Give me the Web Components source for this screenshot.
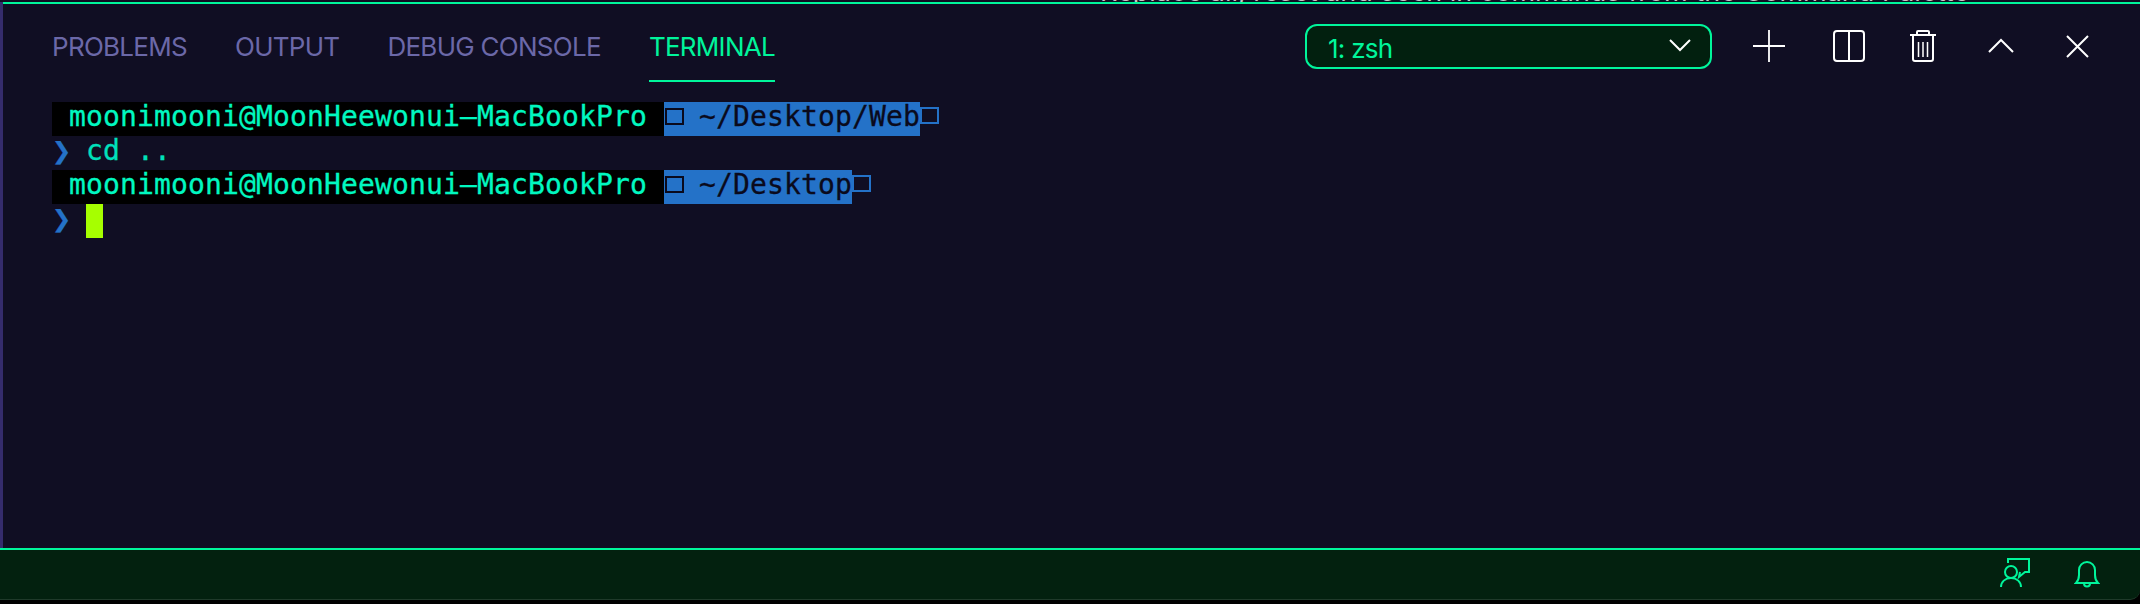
<!DOCTYPE html>
<html>
<head>
<meta charset="utf-8">
<title>Terminal panel</title>
<style>
  html, body { margin: 0; padding: 0; background: #000; }
</style>
</head>
<body>

<vsc-window>
  <panel-header>
    <panel-tab>PROBLEMS</panel-tab>
    <panel-tab>OUTPUT</panel-tab>
    <panel-tab>DEBUG CONSOLE</panel-tab>
    <panel-tab active>TERMINAL</panel-tab>
    <term-select slot="actions">1: zsh</term-select>
    <icon-button slot="actions" icon="plus" style="--gap: 41px"></icon-button>
    <icon-button slot="actions" icon="split" style="--gap: 48px"></icon-button>
    <icon-button slot="actions" icon="trash" style="--gap: 42px"></icon-button>
    <icon-button slot="actions" icon="up" style="--gap: 46px"></icon-button>
    <icon-button slot="actions" icon="close" style="--gap: 45px"></icon-button>
  </panel-header>
  <term-view>
    <prompt-line path="~/Desktop/Web"></prompt-line>
    <command-line>cd ..</command-line>
    <prompt-line path="~/Desktop"></prompt-line>
    <command-line cursor></command-line>
  </term-view>
  <status-bar slot="footer"></status-bar>
</vsc-window>

<script>
// Outer frame: sliver of editor text, green top line, panel body and status bar
class VscWindow extends HTMLElement {
  constructor() {
    super();
    this.attachShadow({ mode: 'open' });
    this.shadowRoot.innerHTML = `
      <style>
        :host { display: flex; flex-direction: column; width: 2140px; height: 604px; background: #000; overflow: hidden; }
        #sliver {
          height: 2px; flex: none; overflow: hidden; background: #100e23;
          padding-left: 1100px; white-space: pre;
          font: 27px/28px "Inter", sans-serif; color: #c8c8c8;
        }
        #sliver span { display: block; margin-top: -22px; }
        #panel {
          flex: 1; display: flex; flex-direction: column; min-height: 0;
          background: #100e23;
          border-left: 3px solid #352c6c;
        }
        #line { height: 2px; flex: none; background: #00f59b; }
        #footer { display: block; flex: none; }
      </style>
      <div id="sliver"><span>Replace all, reset and seen in commands from the Command Palette</span></div>
      <div id="panel">
        <div id="line"></div>
        <slot></slot>
      </div>
      <div id="footer"><slot name="footer"></slot></div>
    `;
  }
}

// Tab row with the terminal actions on its right
class PanelHeader extends HTMLElement {
  constructor() {
    super();
    this.attachShadow({ mode: 'open' });
    this.shadowRoot.innerHTML = `
      <style>
        :host { display: flex; align-items: flex-start; padding: 20px 46px 0 49px; height: 78px; flex: none; }
        #tabs { display: flex; gap: 48px; padding-top: 2px; }
        #actions { margin-left: auto; display: flex; align-items: center; height: 45px; }
      </style>
      <div id="tabs"><slot></slot></div>
      <div id="actions"><slot name="actions"></slot></div>
    `;
  }
}

class PanelTab extends HTMLElement {
  constructor() {
    super();
    this.attachShadow({ mode: 'open' });
    this.shadowRoot.innerHTML = `
      <style>
        :host {
          display: block; height: 40px; padding: 1px 0 13px;
          border-bottom: 2px solid transparent;
          font: 26px/40px "Inter", sans-serif; letter-spacing: -0.72px; color: #6b68a8;
        }
        :host([active]) { color: #00f59b; border-bottom-color: #00f59b; }
      </style>
      <slot></slot>
    `;
  }
}

class TermSelect extends HTMLElement {
  constructor() {
    super();
    this.attachShadow({ mode: 'open' });
    this.shadowRoot.innerHTML = `
      <style>
        :host {
          display: flex; align-items: center; box-sizing: border-box;
          width: 407px; height: 45px; padding: 3px 21px 0;
          background: #02200f; border: 2px solid #00f59b; border-radius: 12px;
          font: 26px "Inter", sans-serif; letter-spacing: -0.72px; color: #00f59b;
        }
        svg { margin: -5px -2px 0 auto; }
      </style>
      <slot></slot>
      <svg width="22" height="13" viewBox="0 0 22 13" fill="none" stroke="#fff" stroke-width="2"><path d="M1 1l10 10L21 1"/></svg>
    `;
  }
}

const ICONS = {
  plus: '<path d="M16 0v32M0 16h32" stroke-width="1.800"/>',
  split: '<rect x="1" y="1" width="30" height="30" rx="3"/><path d="M16 1v30"/>',
  trash: '<path d="M3 5h26M10 5V2a1 1 0 0 1 1-1h10a1 1 0 0 1 1 1v3M6 5v24a2 2 0 0 0 2 2h16a2 2 0 0 0 2-2V5"/><path d="M11.500 12v15M16 12v15M20.500 12v15" stroke-width="1.500"/>',
  up: '<path d="M4 22L16 10l12 12"/>',
  close: '<path d="M5 6l21 21M26 6L5 27"/>'
};

class IconButton extends HTMLElement {
  constructor() {
    super();
    this.attachShadow({ mode: 'open' });
    this.shadowRoot.innerHTML = `
      <style>
        :host { display: block; width: 32px; height: 32px; margin: -2px 0 0 var(--gap, 0); }
        svg { display: block; overflow: visible; }
      </style>
      <svg width="32" height="32" viewBox="0 0 32 32" fill="none" stroke="#fff" stroke-width="2">${ICONS[this.getAttribute('icon')]}</svg>
    `;
  }
}

class TermView extends HTMLElement {
  constructor() {
    super();
    this.attachShadow({ mode: 'open' });
    this.shadowRoot.innerHTML = `
      <style>
        :host {
          display: flex; flex-direction: column; flex: 1; padding-left: 49px;
          font: 28px/30px "DejaVu Sans Mono", monospace; letter-spacing: 0.144px;
          -webkit-text-stroke: 0.3px;
        }
      </style>
      <slot></slot>
    `;
  }
}

// Powerline prompt; the arrows render as empty boxes in the reference
class PromptLine extends HTMLElement {
  constructor() {
    super();
    this.attachShadow({ mode: 'open' });
    const path = this.getAttribute('path');
    this.shadowRoot.innerHTML = `
      <style>
        :host { display: flex; height: 34px; white-space: pre; }
        span { display: block; height: 34px; }
        #user { background: #000; color: #00f8c0; }
        #path { display: flex; background: #2472c8; color: #0a0a1c; }
        #end { color: #2472c8; }
        .tofu { box-sizing: border-box; width: 19px; height: 17px; margin: 6px 15px 0 1px; border: 2.5px solid; }
        #end .tofu { margin: 5px 0 0 0; }
      </style>
      <span id="user"> moonimooni@MoonHeewonui&#8212;MacBookPro </span><span id="path"><span class="tofu"></span>${path}</span><span id="end"><span class="tofu"></span></span>
    `;
  }
}

class CommandLine extends HTMLElement {
  constructor() {
    super();
    this.attachShadow({ mode: 'open' });
    this.shadowRoot.innerHTML = `
      <style>
        :host { display: flex; height: 34px; white-space: pre; color: #00e0bc; }
        #arrow { width: 34px; font-size: 32px; color: #2472c8; }
        #cursor { width: 17px; height: 34px; background: #a6ff00; }
      </style>
      <span id="arrow">&#10095;</span><slot></slot>${this.hasAttribute('cursor') ? '<span id="cursor"></span>' : ''}
    `;
  }
}

class StatusBar extends HTMLElement {
  constructor() {
    super();
    this.attachShadow({ mode: 'open' });
    this.shadowRoot.innerHTML = `
      <style>
        :host {
          display: flex; align-items: center; justify-content: flex-end; gap: 43px; box-sizing: border-box;
          height: 52px; margin-bottom: 4px; padding: 0 40px 2px 0;
          background: #03210f; border-top: 2px solid #00f59b; border-bottom: 1px solid #1f3a2a;
          border-bottom-right-radius: 10px;
        }
        svg { display: block; }
      </style>
      <svg width="32" height="32" viewBox="0 0 32 32" fill="none" stroke="#00f59b" stroke-width="2">
        <circle cx="12" cy="14" r="6"/>
        <path d="M2 29c0-5 4-9 10-9s10 4 10 9"/>
        <path d="M9 5V1h21v13h-4l-6 5 1-5"/>
      </svg>
      <svg width="26" height="30" viewBox="0 0 26 30" fill="none" stroke="#00f59b" stroke-width="2">
        <path d="M2 24c2-2 3-4 3-8v-5a8 8 0 0 1 16 0v5c0 4 1 6 3 8z"/>
        <path d="M10 24.500a3 3 0 0 0 6 0"/>
      </svg>
    `;
  }
}

customElements.define('vsc-window', VscWindow);
customElements.define('panel-header', PanelHeader);
customElements.define('panel-tab', PanelTab);
customElements.define('term-select', TermSelect);
customElements.define('icon-button', IconButton);
customElements.define('term-view', TermView);
customElements.define('prompt-line', PromptLine);
customElements.define('command-line', CommandLine);
customElements.define('status-bar', StatusBar);
</script>
</body>
</html>
